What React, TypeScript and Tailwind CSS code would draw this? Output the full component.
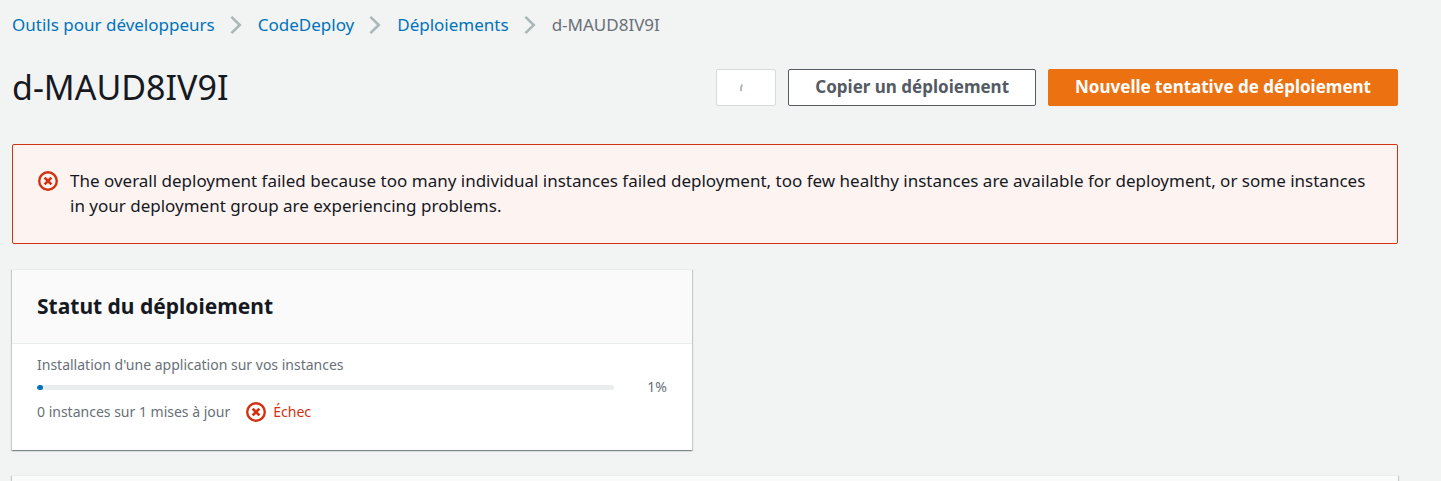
const crumbs = ['Outils pour développeurs', 'CodeDeploy', 'Déploiements'];

const cardShadow =
  'border-t border-[#eaeded] shadow-[0_1px_1px_0_rgba(0,28,36,0.3),1px_1px_1px_0_rgba(0,28,36,0.15),-1px_1px_1px_0_rgba(0,28,36,0.15)]';

function Chevron() {
  return (
    <svg viewBox="0 0 12 20" className="h-5 w-3 shrink-0" fill="none" stroke="#aab7b8" strokeWidth="2.5" aria-hidden="true">
      <path d="M1.400 1.800 9.800 10 1.400 18.200" />
    </svg>
  );
}

function ErrorIcon() {
  return (
    <svg viewBox="0 0 20 20" className="h-5 w-5 shrink-0" fill="none" stroke="#d13212" aria-hidden="true">
      <circle cx="10" cy="10" r="8.800" strokeWidth="2.400" />
      <path d="M6.600 6.600 13.400 13.400M13.400 6.600 6.600 13.400" strokeWidth="2.700" />
    </svg>
  );
}

export default function App() {
  return (
    <main className="flex min-h-screen flex-col bg-[#f2f3f3] pt-3 pr-[43px] pl-3 font-['Noto_Sans',sans-serif] text-[#16191f]">
      <nav aria-label="Fil d'Ariane">
        <ol className="flex items-center text-[17px] leading-[25px]">
          {crumbs.map((label) => (
            <li key={label} className="flex items-center">
              <a href="#" className="text-[#0073bb]">
                {label}
              </a>
              <span className="pr-4 pl-[15px]">
                <Chevron />
              </span>
            </li>
          ))}
          <li className="text-[#687078]" aria-current="page">
            d-MAUD8IV9I
          </li>
        </ol>
      </nav>

      <header className="mt-7 flex items-center justify-between">
        <h1 className="text-[34px] leading-[45px]">d-MAUD8IV9I</h1>
        <div className="flex gap-3 text-[17px] leading-[25px] font-bold">
          <button
            type="button"
            disabled
            aria-label="Chargement"
            className="flex h-[37px] w-[60px] items-center justify-center rounded-[2px] border border-[#d5dbdb] bg-white"
          >
            <svg viewBox="0 0 20 20" className="h-5 w-5" fill="none" stroke="#aab7b8" strokeWidth="2" aria-hidden="true">
              <path d="M5 13C4.700 10.600 4.900 8.400 6.300 6.500" />
            </svg>
          </button>
          <button type="button" className="h-[37px] rounded-[2px] border border-[#545b64] bg-white px-[26px] pb-[2px] text-[#545b64]">
            Copier un déploiement
          </button>
          <button type="button" className="h-[37px] rounded-[2px] border border-[#ec7211] bg-[#ec7211] px-[26px] pb-[2px] text-white">
            Nouvelle tentative de déploiement
          </button>
        </div>
      </header>

      <div role="alert" className="mt-[34px] flex gap-3 rounded-[2px] border border-[#d13212] bg-[#fdf3f1] px-[25px] pt-[23px] pb-[25px]">
        <span className="mt-[3px]">
          <ErrorIcon />
        </span>
        <p className="text-[17px] leading-[25px]">
          The overall deployment failed because too many individual instances failed deployment, too few healthy
          instances are available for deployment, or some instances in your deployment group are experiencing problems.
        </p>
      </div>

      <div className="mt-[25px] grid grid-cols-2 gap-[26px]">
        <section className={`bg-white ${cardShadow}`}>
          <div className="border-b border-[#eaeded] bg-[#fafafa] px-[25px] pt-5 pb-[21px]">
            <h2 className="text-[21px] leading-8 font-bold">Statut du déploiement</h2>
          </div>
          <div className="px-[25px] pt-[10px] pb-[27px] text-[14px] leading-[22px] text-[#687078]">
            <p id="install-label">Installation d'une application sur vos instances</p>
            <div className="flex items-center">
              <div
                role="progressbar"
                aria-labelledby="install-label"
                aria-valuenow={1}
                aria-valuemin={0}
                aria-valuemax={100}
                className="h-[5px] flex-1 overflow-hidden rounded-full bg-[#eaeded]"
              >
                <div className="h-full w-[1%] min-w-[5px] rounded-full bg-[#0073bb]" />
              </div>
              <span className="w-[53px] text-right">1%</span>
            </div>
            <div className="mt-[3px] flex items-center gap-4">
              <p>0 instances sur 1 mises à jour</p>
              <p className="flex items-center gap-[7px] text-[#d13212]">
                <ErrorIcon />
                Échec
              </p>
            </div>
          </div>
        </section>
      </div>

      <section className={`mt-[25px] flex-1 bg-[#fafafa] ${cardShadow}`} />
    </main>
  );
}
